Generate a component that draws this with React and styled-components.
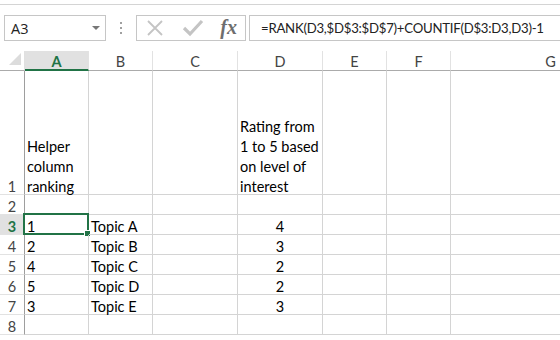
import React from 'react'
import styled, { createGlobalStyle } from 'styled-components'

const GlobalStyle = createGlobalStyle`
    html, body {
        margin: 0;
        padding: 0;
        background: #ffffff;
        overflow: hidden;
    }
    body {
        font-family: "Lato", "Liberation Sans", sans-serif;
        color: #000;
    }
`

const Page = styled.div`
    width: 560px;
    height: 340px;
    overflow: hidden;
    background: #fff;
`

const TopStrip = styled.div`
    height: 4px;
    border-bottom: 1px solid #d4d4d4;
`

const FormulaBar = styled.div`
    display: flex;
    align-items: stretch;
    height: 26px;
    margin: 10px 0 10px 4px;
`

const NameBox = styled.div`
    box-sizing: border-box;
    flex: 0 0 102px;
    display: flex;
    align-items: center;
    justify-content: space-between;
    padding: 0 5px 0 6px;
    border: 1px solid #c6c6c6;
    font-family: "Open Sans", "Liberation Sans", sans-serif;
    font-size: 14.5px;
    color: #222;
`

const Caret = styled.span`
    width: 0;
    height: 0;
    border-left: 4px solid transparent;
    border-right: 4px solid transparent;
    border-top: 4px solid #777;
    margin-bottom: 1px;
`

const Grip = styled.div`
    flex: 0 0 30px;
    display: flex;
    flex-direction: column;
    align-items: center;
    justify-content: center;
    gap: 3px;
`

const Dot = styled.span`
    width: 2px;
    height: 2px;
    background: #a0a0a0;
`

const FxBox = styled.div`
    box-sizing: border-box;
    flex: 0 0 110px;
    display: flex;
    align-items: center;
    justify-content: space-between;
    padding: 0 8px 0 8px;
    border: 1px solid #c6c6c6;
`

const Fx = styled.span`
    font-family: "Liberation Serif", "DejaVu Serif", serif;
    font-style: italic;
    font-weight: 700;
    font-size: 20px;
    color: #6e6e6e;
    margin-bottom: 2px;
`

const FormulaInput = styled.div`
    box-sizing: border-box;
    flex: 1 1 auto;
    min-width: 0;
    overflow: hidden;
    margin-left: 3px;
    display: flex;
    align-items: center;
    padding-left: 11px;
    border: 1px solid #c6c6c6;
    border-right: none;
    font-family: "Lato", "Liberation Sans", sans-serif;
    font-size: 13.2px;
    letter-spacing: -0.25px;
    color: #222;
    white-space: nowrap;
`

const Sheet = styled.div`
    display: grid;
    grid-template-columns: 25px 64px 64px 85px 85px 64px 64px 200px;
    grid-template-rows: 20px 124px repeat(8, 20px);
    margin-top: 1px;
    font-family: "Lato", "Liberation Sans", sans-serif;
    font-size: 14.5px;
`

const Corner = styled.div`
    box-sizing: border-box;
    border-right: 1px solid #e0e0e0;
    border-bottom: 1px solid #ababab;
    display: flex;
    align-items: flex-end;
    justify-content: flex-end;
    padding: 0 3px 5px 0;
`

const ColHead = styled.div`
    box-sizing: border-box;
    border-right: 1px solid #e2e2e2;
    border-bottom: ${p => (p.$active ? '2px solid #217346' : '1px solid #ababab')};
    background: ${p => (p.$active ? '#e1e1e1' : '#fff')};
    color: ${p => (p.$active ? '#217346' : '#444')};
    font-weight: ${p => (p.$active ? 700 : 400)};
    display: flex;
    align-items: center;
    justify-content: center;
    padding-top: ${p => (p.$active ? 2 : 1)}px;
`

const RowHead = styled.div`
    box-sizing: border-box;
    border-right: 1px solid #9e9e9e;
    border-bottom: 1px solid #e2e2e2;
    background: ${p => (p.$active ? '#e1e1e1' : '#fff')};
    color: ${p => (p.$active ? '#217346' : '#444')};
    font-weight: ${p => (p.$active ? 700 : 400)};
    display: flex;
    align-items: flex-end;
    justify-content: center;
    line-height: 20px;
`

const Cell = styled.div`
    position: relative;
    box-sizing: border-box;
    border-right: 1px solid #d4d4d4;
    border-bottom: 1px solid #d4d4d4;
    display: flex;
    flex-direction: column;
    justify-content: flex-end;
    align-items: ${p => (p.$center ? 'center' : 'flex-start')};
    padding: 0 2px;
    line-height: 20px;
    color: #000;
    white-space: nowrap;
`

const CellText = styled.div`
    display: flex;
    flex-direction: column;
    align-items: inherit;
    margin-bottom: -3px;
`

const Selection = styled.div`
    position: absolute;
    left: -2px;
    top: -2px;
    right: -1px;
    bottom: -1px;
    border: 2px solid #217346;
    pointer-events: none;
`

const Handle = styled.div`
    position: absolute;
    right: -4px;
    bottom: -4px;
    width: 5px;
    height: 5px;
    background: #217346;
    border: 1px solid #fff;
`

const CornerTriangle = () => (
    <svg width="12" height="12" viewBox="0 0 12 12">
        <polygon points="12,0 12,12 0,12" fill="#dcdcdc" />
    </svg>
)

const CancelIcon = () => (
    <svg width="20" height="20" viewBox="0 0 20 20">
        <path d="M3 3 L17 17 M17 3 L3 17" stroke="#c4c4c4" strokeWidth="1.8" fill="none" />
    </svg>
)

const EnterIcon = () => (
    <svg width="22" height="20" viewBox="0 0 22 20">
        <path d="M2 10 L8 16 L20 3" stroke="#c4c4c4" strokeWidth="3.2" fill="none" />
    </svg>
)

const columns = ['A', 'B', 'C', 'D', 'E', 'F', 'G']

const rows = [
    { n: 1, a: ['Helper', 'column', 'ranking'], b: '', d: ['Rating from', '1 to 5 based', 'on level of', 'interest'] },
    { n: 2, a: '', b: '', d: '' },
    { n: 3, a: '1', b: 'Topic A', d: '4' },
    { n: 4, a: '2', b: 'Topic B', d: '3' },
    { n: 5, a: '4', b: 'Topic C', d: '2' },
    { n: 6, a: '5', b: 'Topic D', d: '2' },
    { n: 7, a: '3', b: 'Topic E', d: '3' },
    { n: 8, a: '', b: '', d: '' },
]

const Lines = ({ value }) => (
    <CellText>
        {Array.isArray(value) ? value.map(line => <span key={line}>{line}</span>) : value}
    </CellText>
)

const App = () => {
    return (
        <Page>
            <GlobalStyle />
            <TopStrip />
            <FormulaBar>
                <NameBox>
                    <span>A3</span>
                    <Caret />
                </NameBox>
                <Grip>
                    <Dot />
                    <Dot />
                    <Dot />
                </Grip>
                <FxBox>
                    <CancelIcon />
                    <EnterIcon />
                    <Fx>fx</Fx>
                </FxBox>
                <FormulaInput>=RANK(D3,$D$3:$D$7)+COUNTIF(D$3:D3,D3)-1</FormulaInput>
            </FormulaBar>
            <Sheet>
                <Corner>
                    <CornerTriangle />
                </Corner>
                {columns.map(c => (
                    <ColHead key={c} $active={c === 'A'}>{c}</ColHead>
                ))}
                {rows.map(r => (
                    <React.Fragment key={r.n}>
                        <RowHead $active={r.n === 3}>
                            <Lines value={String(r.n)} />
                        </RowHead>
                        <Cell>
                            <Lines value={r.a} />
                            {r.n === 3 && (
                                <Selection>
                                    <Handle />
                                </Selection>
                            )}
                        </Cell>
                        <Cell>
                            <Lines value={r.b} />
                        </Cell>
                        <Cell />
                        <Cell $center={!Array.isArray(r.d)}>
                            <Lines value={r.d} />
                        </Cell>
                        <Cell />
                        <Cell />
                        <Cell />
                    </React.Fragment>
                ))}
            </Sheet>
        </Page>
    )
}

export default App
